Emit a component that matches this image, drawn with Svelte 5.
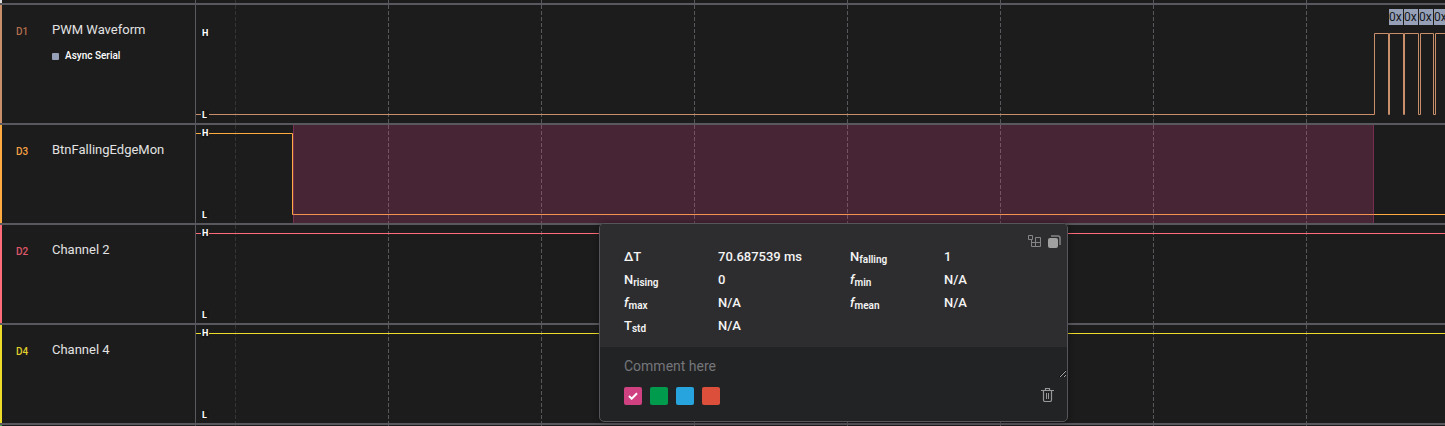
<script>
  const channels = [
    { id: 'D1', name: 'PWM Waveform', color: '#c98f6b', tag: '#b56d4c', analyzer: 'Async Serial', height: 118, high: 28,
      path: 'M0 109.5H1178.5V28.5H1192.5V109.5H1193.5V28.5H1207.5V109.5H1208.5V28.5H1222.5V109.5H1224.5V28.5H1237.5V109.5H1239.5V28.5H3000' },
    { id: 'D3', name: 'BtnFallingEdgeMon', color: '#ffab40', tag: '#f5a044', height: 98, high: 8,
      path: 'M0 8.5H96.5V89.5H3000', selected: true },
    { id: 'D2', name: 'Channel 2', color: '#ff6b78', tag: '#e0586a', height: 98, high: 8, path: 'M0 8.5H3000' },
    { id: 'D4', name: 'Channel 4', color: '#eedc2a', tag: '#e0cf2c', height: 98, high: 8, path: 'M0 8.5H3000' }
  ];
  const grid = Array.from({ length: 18 }, (_, i) => 192.5 + i * 153);
  const bytes = [1193, 1208, 1223, 1238];
  const stats = [
    ['ΔT', '', '70.687539 ms'], ['N', 'falling', '1'],
    ['N', 'rising', '0'], ['f', 'min', 'N/A'],
    ['f', 'max', 'N/A'], ['f', 'mean', 'N/A'],
    ['T', 'std', 'N/A']
  ];
  const swatches = [
    { name: 'Pink', color: '#cf4180' },
    { name: 'Green', color: '#009b4d' },
    { name: 'Blue', color: '#27a4dd' },
    { name: 'Red', color: '#dc4f3b' }
  ];
  let picked = $state('Pink');
  let comment = $state('');
</script>

{#snippet gridLines()}
  <path class="minor" d="M39.5 0V200" />
  {#each grid as x}
    <path class="major" d="M{x} 0V200" />
  {/each}
{/snippet}

<main>
  <div class="sliver top">
    <div class="label" style="border-color: #dddddd"></div>
    <svg class="plot">{@render gridLines()}</svg>
  </div>
  {#each channels as ch}
    <section class="row" style="height: {ch.height}px">
      <header class="label" style="border-color: {ch.color}">
        <span class="id" style="color: {ch.tag}">{ch.id}</span>
        <div class="names">
          <h2>{ch.name}</h2>
          {#if ch.analyzer}
            <p><i></i>{ch.analyzer}</p>
          {/if}
        </div>
      </header>
      <svg class="plot" aria-label="{ch.name} signal">
        {@render gridLines()}
        <path class="wave" d={ch.path} stroke={ch.color} />
        {#if ch.selected}
          <rect class="selection" x="97" y="0" width="1081" height="98" />
          <path class="edge" d="M97.5 0V98M1177.5 0V98" />
        {/if}
        {#if ch.analyzer}
          {#each bytes as x}
            <svg {x} y="4" width="14" height="16">
              <rect width="14" height="16" fill="#96a1b8" />
              <text class="byte" x="0" y="12">0x</text>
            </svg>
          {/each}
        {/if}
        <rect class="chip" x="5" y={ch.high - 4} width="8" height="9" rx="2" />
        <rect class="chip" x="5" y={ch.high + 77} width="8" height="9" rx="2" />
        <text class="level" x="6" y={ch.high + 3}>H</text>
        <text class="level" x="6" y={ch.high + 85}>L</text>
      </svg>
      {#if ch.selected}
        <div class="anchor">
          <aside class="popup">
            <div class="measures">
              <div class="tools">
                <button aria-label="Choose measurements">
                  <svg width="13" height="13" viewBox="0 0 13 13" fill="none" stroke="#858587">
                    <path d="M.5 .5h4v4h-4zM3.5 4.5v7h9v-9h-5v9M3.5 7.5h9" />
                  </svg>
                </button>
                <button aria-label="Copy measurements">
                  <svg width="13" height="13" viewBox="0 0 13 13">
                    <rect y="3" width="10" height="10" rx="2" fill="#a0a0a1" />
                    <path d="M3 1h7a2 2 0 0 1 2 2v7" fill="none" stroke="#858587" stroke-width="1.5" />
                  </svg>
                </button>
              </div>
              <dl>
                {#each stats as [symbol, sub, value]}
                  <dt>{#if symbol === 'f'}<em>f</em>{:else}{symbol}{/if}<sub>{sub}</sub></dt>
                  <dd>{value}</dd>
                {/each}
              </dl>
            </div>
            <div class="note">
              <textarea aria-label="Comment" placeholder="Comment here" bind:value={comment}></textarea>
              <div class="actions">
                {#each swatches as s}
                  <button class="swatch" style="background: {s.color}" aria-label={s.name}
                    aria-pressed={picked === s.name} onclick={() => (picked = s.name)}>
                    {#if picked === s.name}
                      <svg width="10" height="8" viewBox="0 0 10 8" fill="none" stroke="#fff" stroke-width="2">
                        <path d="M1 4l2.7 2.7L9 1.2" />
                      </svg>
                    {/if}
                  </button>
                {/each}
                <button class="trash" aria-label="Delete measurement">
                  <svg width="13" height="14" viewBox="0 0 13 14" fill="none" stroke="#98989a">
                    <path d="M0 2.5h13M4.5 2.5v-2h4v2" stroke-width="1.2" />
                    <path d="M2.5 3v9q0 1.5 1.5 1.5h5q1.5 0 1.5-1.5v-9" stroke-width="1.2" />
                    <path d="M5.5 5v6M7.5 5v6" />
                  </svg>
                </button>
              </div>
            </div>
          </aside>
        </div>
      {/if}
    </section>
  {/each}
  <div class="sliver bottom">
    <div class="label" style="border-color: #3fae49"></div>
    <svg class="plot">{@render gridLines()}</svg>
  </div>
</main>

<style>
  :global(body) { margin: 0; background: #1c1c1c; }
  main { font-family: Roboto, sans-serif; color: #e2e2e2; overflow: hidden; }
  .sliver { display: flex; }
  .top { height: 3px; }
  .bottom { height: 1px; border-top: 2px solid #58585e; }
  .row { position: relative; display: flex; border-top: 2px solid #58585e; }
  .label {
    flex: none; display: flex; box-sizing: border-box; width: 196px; padding-left: 14px;
    border-left: 2px solid; border-right: 1px solid #58585e !important;
  }
  .id { width: 36px; padding-top: 20px; font-size: 10px; line-height: 14px; font-weight: 500; }
  h2 { margin: 0; padding-top: 16px; font-size: 13px; line-height: 18px; font-weight: 400; }
  p { display: flex; align-items: center; gap: 6px; margin: 10px 0 0; font-size: 10px; line-height: 14px; font-weight: 500; color: #fff; }
  i { width: 7px; height: 7px; border-radius: 1px; background: #96a1b8; }
  .plot { flex: 1; min-width: 0; height: 100%; overflow: hidden; }
  .minor { stroke: #343434; stroke-dasharray: 4 2; }
  .major { stroke: #58585c; stroke-dasharray: 4 2; }
  .wave { fill: none; stroke-width: 1; }
  .selection { fill: #cf4180; fill-opacity: .24; }
  .edge { stroke: #cf4180; stroke-opacity: .35; }
  .chip { fill: #171717; }
  .level { fill: #fff; font-size: 9px; font-weight: 700; }
  .byte { fill: #17181c; font-size: 12px; }
  .anchor { position: absolute; z-index: 2; left: 293px; top: 98px; width: 1081px; display: flex; justify-content: center; }
  .popup {
    box-sizing: border-box; width: 469px; overflow: hidden; border: 1px solid #55555b; border-radius: 5px;
    background: #222325; box-shadow: 0 0 6px #0006;
  }
  .measures { position: relative; padding: 23px 24px 11px; background: #2d2d2f; }
  .tools { position: absolute; top: 11px; right: 6px; display: flex; gap: 7px; }
  button { display: flex; align-items: center; justify-content: center; padding: 0; border: 0; background: none; cursor: pointer; }
  dl {
    display: grid; grid-template-columns: 94px 132px 94px 1fr; margin: 0; font-size: 13px; line-height: 20px;
    row-gap: 3px; font-weight: 500; color: #f4f4f4;
  }
  dt, dd { margin: 0; height: 20px; }
  sub { font-size: 10px; line-height: 0; font-weight: 600; vertical-align: -2px; }
  textarea {
    display: block; box-sizing: border-box; width: 100%; height: 31px; padding: 10px 24px 3px; border: 0; outline: 0;
    resize: vertical; overflow: hidden; background: none; color: #e2e2e2; color-scheme: dark;
    font: 14px/18px Roboto, sans-serif;
  }
  textarea::placeholder { color: #75767a; }
  .actions { display: flex; gap: 8px; padding: 9px 13px 16px 24px; }
  .swatch { width: 18px; height: 18px; border-radius: 2px; }
  .trash { height: 15px; margin-left: auto; }
</style>
